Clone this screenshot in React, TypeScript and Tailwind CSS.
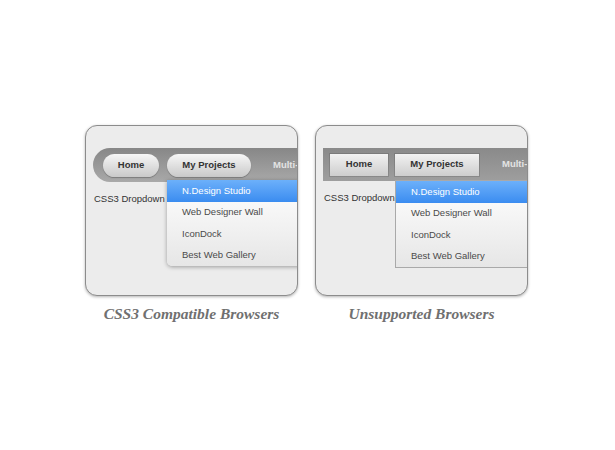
import React from 'react';

const links = ['N.Design Studio', 'Web Designer Wall', 'IconDock', 'Best Web Gallery'];

function Dropdown({ modern }: { modern: boolean }) {
  return (
    <ul
      className={
        modern
          ? 'absolute left-[81px] top-[54px] w-[150px] overflow-hidden rounded-b-[5px] bg-gradient-to-b from-white to-[#e6e6e6] shadow-[0_1px_4px_rgba(0,0,0,0.35)]'
          : 'absolute left-[79px] top-[54px] w-[150px] border border-[#a9a9a9] bg-gradient-to-b from-white to-[#e6e6e6]'
      }
    >
      {links.map((l, i) => (
        <li
          key={l}
          className={
            i === 0
              ? 'flex h-[21.5px] items-center bg-gradient-to-b from-[#6cb0fa] to-[#3a8cf0] pl-[15px] text-white'
              : 'flex h-[21.5px] items-center pl-[15px] text-[#4a4a4a]'
          }
        >
          {l}
        </li>
      ))}
    </ul>
  );
}

function Card({ modern }: { modern: boolean }) {
  const btn = modern
    ? 'flex h-[23px] items-center justify-center rounded-full bg-gradient-to-b from-[#f7f7f7] to-[#c9c9c9] font-bold text-[#333] shadow-[0_1px_1px_rgba(0,0,0,0.25)]'
    : 'flex h-[22px] items-center justify-center bg-gradient-to-b from-[#f2f2f2] to-[#cdcdcd] font-bold text-[#333] shadow-[0_0_0_1px_rgba(0,0,0,0.12)]';
  return (
    <div className="relative h-[171px] w-[213px] overflow-hidden rounded-[12px] border border-[#8c8c8c] bg-[#ececec] shadow-[0_1px_3px_rgba(0,0,0,0.3)] font-['Liberation_Sans',Arial,sans-serif] text-[9.5px]">
      <div
        className={
          modern
            ? 'ml-[7px] mt-[22px] flex h-[34px] w-[260px] items-center gap-[8px] rounded-l-full bg-gradient-to-b from-[#878787] to-[#a9a9a9] pl-[10px]'
            : 'ml-[7px] mt-[22px] flex h-[33px] w-[260px] items-center gap-[7px] bg-gradient-to-b from-[#8a8a8a] to-[#9e9e9e] pl-[7px]'
        }
      >
        <div className={`${btn} ${modern ? 'w-[56px]' : 'w-[58px]'}`}>Home</div>
        <div className={`${btn} w-[84px]`}>My Projects</div>
        <div className={`font-bold text-[#e4e4e4] ${modern ? 'ml-[14px]' : 'ml-[16px]'}`}>Multi-Level</div>
      </div>
      <p className="ml-[8px] mt-[10px] text-[#333]">CSS3 Dropdown Menu</p>
      <Dropdown modern={modern} />
    </div>
  );
}

export default function App() {
  return (
    <div className="flex h-[450px] w-full gap-[17px] bg-white pl-[85px] pt-[125px]">
      <div className="flex flex-col items-center">
        <Card modern />
        <p className="mt-[6px] font-['Liberation_Serif',serif] text-[15.5px] font-bold italic text-[#707070]">CSS3 Compatible Browsers</p>
      </div>
      <div className="flex flex-col items-center">
        <Card modern={false} />
        <p className="mt-[6px] font-['Liberation_Serif',serif] text-[15.5px] font-bold italic text-[#707070]">Unsupported Browsers</p>
      </div>
    </div>
  );
}
